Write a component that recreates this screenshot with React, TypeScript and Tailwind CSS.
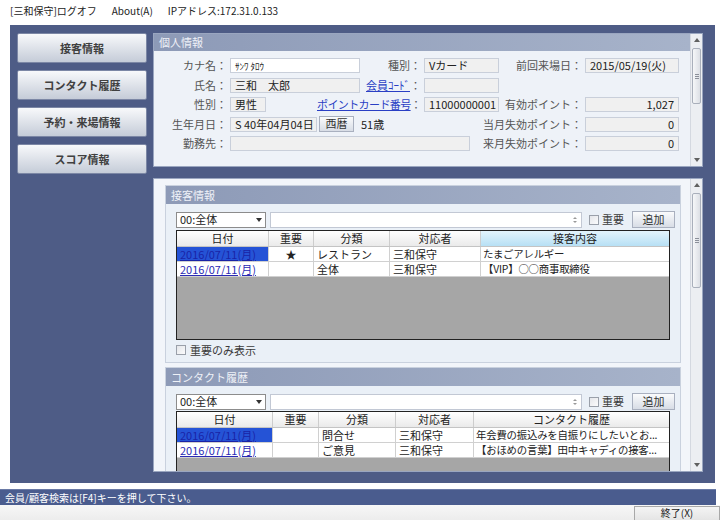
import React from 'react';

const font = "font-['Noto_Sans_CJK_JP','Noto_Sans',sans-serif]";

const Arrow: React.FC<{ down?: boolean }> = ({ down }) => (
  <svg width="6" height="4" viewBox="0 0 6 4">
    {down ? <path d="M0 0h6L3 4z" fill="#606060" /> : <path d="M0 4h6L3 0z" fill="#606060" />}
  </svg>
);

const ScrollBar: React.FC<{ thumb: string }> = ({ thumb }) => (
  <div className="w-[12px] h-full flex flex-col bg-[#eceef2] border-l border-[#d4d8e0]">
    <div className="h-[12px] flex items-center justify-center">
      <Arrow />
    </div>
    <div className={`${thumb} mt-[2px] mx-[1px] rounded-[2px] border border-[#a9afbb] bg-linear-to-r from-[#f6f7f9] to-[#dcdfe5] flex flex-col items-center justify-center gap-[1px]`}>
      <div className="w-[4px] h-px bg-[#8a8f99]" />
      <div className="w-[4px] h-px bg-[#8a8f99]" />
      <div className="w-[4px] h-px bg-[#8a8f99]" />
    </div>
    <div className="flex-1" />
    <div className="h-[12px] flex items-center justify-center">
      <Arrow down />
    </div>
  </div>
);

const Field: React.FC<{ w: string; white?: boolean; right?: boolean; children?: React.ReactNode }> = ({ w, white, right, children }) => (
  <div
    className={`${w} h-[15px] shrink-0 border border-[#c9cfda] ${white ? 'bg-white' : 'bg-[#f0f0f0]'} px-[4px] text-[11px] leading-[13px] text-[#222] whitespace-nowrap overflow-hidden ${right ? 'text-right' : ''}`}
  >
    {children}
  </div>
);

const Label: React.FC<{ w: string; tight?: boolean; children: React.ReactNode }> = ({ w, tight, children }) => (
  <div className={`${w} shrink-0 flex justify-end pr-[3px] text-[11px] leading-[15px] text-[#555] whitespace-nowrap ${tight ? 'tracking-[-0.6px]' : ''}`}>
    <span>{children}</span>
  </div>
);

const LinkLabel: React.FC<{ text: string }> = ({ text }) => (
  <>
    <span className="text-[#2a3fc4] underline">{text}</span>
    <span>：</span>
  </>
);

const SideButton: React.FC<{ label: string }> = ({ label }) => (
  <div className="h-[30px] w-[130px] rounded-[2px] border border-[#7c87a5] bg-linear-to-b from-[#f8f9fb] to-[#c5ccd8] flex items-center justify-center text-[11px] font-semibold text-[#404040]">
    {label}
  </div>
);

const Header: React.FC<{ title: string }> = ({ title }) => (
  <div className="h-[18px] shrink-0 bg-linear-to-r from-[#8d9ab7] to-[#a7b3ca] pl-[5px] flex items-center text-[11px] text-[#eef1f7]">
    {title}
  </div>
);

const CheckBox = () => <div className="w-[10px] h-[10px] shrink-0 border border-[#9aa0aa] bg-linear-to-br from-[#e4e6ea] to-[#fbfbfc]" />;

const FilterRow = () => (
  <div className="flex items-center h-[17px]">
    <div className="w-[90px] h-[16px] border border-[#8c8c8c] bg-white flex items-center justify-between px-[3px] text-[11px] text-[#222]">
      <span>00:全体</span>
      <svg width="6" height="4" viewBox="0 0 6 4">
        <path d="M0 0h6L3 4z" fill="#333" />
      </svg>
    </div>
    <div className="ml-[4px] w-[312px] h-[16px] border border-[#c2c8d4] bg-white flex items-center justify-end pr-[4px]">
      <div className="flex flex-col gap-[2px]">
        <svg width="4" height="2" viewBox="0 0 4 2"><path d="M0 2h4L2 0z" fill="#999" /></svg>
        <svg width="4" height="2" viewBox="0 0 4 2"><path d="M0 0h4L2 2z" fill="#999" /></svg>
      </div>
    </div>
    <div className="ml-[7px]">
      <CheckBox />
    </div>
    <span className="ml-[3px] text-[11px] text-[#3a3a3a]">重要</span>
    <div className="ml-[8px] w-[43px] h-[17px] border border-[#a9b0bf] bg-linear-to-b from-[#fafbfc] to-[#d8dde6] flex items-center justify-center text-[11px] text-[#333]">
      追加
    </div>
  </div>
);

type Row = { date: string; imp: string; cat: string; staff: string; body: string };

const Table: React.FC<{ widths: string[]; head: string[]; rows: Row[]; hl?: boolean }> = ({ widths, head, rows, hl }) => (
  <div className="w-[494px] h-[110px] shrink-0 border border-[#222] bg-[#a6a6a6] flex flex-col text-[11px] text-[#222]">
    <div className="h-[16px] flex bg-linear-to-b from-white to-[#eaeaea] border-b border-[#c4c4c4]">
      {head.map((h, i) => (
        <div
          key={h}
          className={`${widths[i]} h-full flex items-center justify-center border-r border-[#cdcdcd] last:border-r-0 ${
            hl && i === 4 ? 'bg-linear-to-b from-[#e3f4fc] to-[#b7e0f5]' : ''
          }`}
        >
          {h}
        </div>
      ))}
    </div>
    {rows.map((r, ri) => (
      <div key={ri} className="h-[15px] flex bg-white border-b border-[#d0d0d0]">
        <div className={`${widths[0]} h-full flex items-center pl-[3px] border-r border-[#d0d0d0] ${ri === 0 ? 'bg-[#2553d6] text-[#1a23a6]' : 'text-[#2a2ab4]'}`}>
          <span className="underline">{r.date}</span>
        </div>
        <div className={`${widths[1]} h-full flex items-center justify-center border-r border-[#d0d0d0]`}>{r.imp}</div>
        <div className={`${widths[2]} h-full flex items-center pl-[3px] border-r border-[#d0d0d0]`}>{r.cat}</div>
        <div className={`${widths[3]} h-full flex items-center pl-[3px] border-r border-[#d0d0d0]`}>{r.staff}</div>
        <div className={`${widths[4]} h-full flex items-center pl-[2px] whitespace-nowrap overflow-hidden text-[10.4px] tracking-[-0.2px]`}>{r.body}</div>
      </div>
    ))}
  </div>
);

const App: React.FC = () => {
  return (
    <div className={`w-[720px] h-[520px] bg-white overflow-hidden flex flex-col ${font}`}>
      {/* menu */}
      <div className="h-[25px] shrink-0 flex items-center pl-[10px] pb-[4px] text-[10px] text-[#222]">
        <span>[三和保守]ログオフ</span>
        <span className="ml-[15px]">About(A)</span>
        <span className="ml-[15px]">IPアドレス:172.31.0.133</span>
      </div>

      {/* main */}
      <div className="ml-[10px] w-[705px] h-[458px] shrink-0 bg-[#4e5c86] flex pt-[8px] pl-[7px] gap-[6px]">
        <div className="flex flex-col gap-[7px]">
          <SideButton label="接客情報" />
          <SideButton label="コンタクト履歴" />
          <SideButton label="予約・来場情報" />
          <SideButton label="スコア情報" />
        </div>

        <div className="w-[550px] flex flex-col">
          {/* personal info */}
          <div className="h-[134px] flex border border-[#9aa6c0] bg-[#eef2f8]">
            <div className="flex-1 flex flex-col">
              <div className="h-[17px] bg-linear-to-r from-[#8d9ab7] to-[#a7b3ca] pl-[5px] flex items-center text-[11px] text-[#eef1f7]">
                個人情報
              </div>
              <div className="pt-[7px] flex flex-col">
                <div className="h-[19.5px] flex">
                  <Label w="w-[76px]">カナ名：</Label>
                  <Field w="w-[130px]" white>
                    <span className="text-[9px]">ｻﾝﾜ ﾀﾛｳ</span>
                  </Field>
                  <Label w="w-[64px]">種別：</Label>
                  <Field w="w-[75px]">Vカード</Field>
                  <Label w="w-[86px]">前回来場日：</Label>
                  <Field w="w-[94px]">2015/05/19(火)</Field>
                </div>
                <div className="h-[19.5px] flex">
                  <Label w="w-[76px]">氏名：</Label>
                  <Field w="w-[130px]">三和　太郎</Field>
                  <Label w="w-[64px]">
                    <LinkLabel text="会員ｺｰﾄﾞ" />
                  </Label>
                  <Field w="w-[75px]" />
                </div>
                <div className="h-[19.5px] flex">
                  <Label w="w-[76px]">性別：</Label>
                  <div className="w-[130px] shrink-0">
                    <Field w="w-[36px]">男性</Field>
                  </div>
                  <Label w="w-[64px]" tight>
                    <LinkLabel text="ポイントカード番号" />
                  </Label>
                  <Field w="w-[75px]">11000000001</Field>
                  <Label w="w-[86px]">有効ポイント：</Label>
                  <Field w="w-[94px]" right>
                    1,027
                  </Field>
                </div>
                <div className="h-[19.5px] flex">
                  <Label w="w-[76px]">生年月日：</Label>
                  <div className="w-[269px] shrink-0 flex items-start">
                    <Field w="w-[87px]">S 40年04月04日</Field>
                    <div className="ml-[2px] w-[35px] h-[16px] -mt-px border border-[#a9b0bf] bg-linear-to-b from-[#fafbfc] to-[#d8dde6] flex items-center justify-center text-[11px] text-[#333]">
                      西暦
                    </div>
                    <span className="ml-[7px] text-[11px] leading-[15px] text-[#222]">51歳</span>
                  </div>
                  <Label w="w-[86px]">当月失効ポイント：</Label>
                  <Field w="w-[94px]" right>
                    0
                  </Field>
                </div>
                <div className="h-[19.5px] flex">
                  <Label w="w-[76px]">勤務先：</Label>
                  <div className="w-[269px] shrink-0">
                    <Field w="w-[240px]" />
                  </div>
                  <Label w="w-[86px]">来月失効ポイント：</Label>
                  <Field w="w-[94px]" right>
                    0
                  </Field>
                </div>
              </div>
            </div>
            <ScrollBar thumb="h-[56px]" />
          </div>

          {/* history panel */}
          <div className="mt-[11px] h-[294px] flex border border-[#9aa6c0] bg-[#f2f5fa]">
            <div className="flex-1 overflow-hidden pl-[11px] pt-[6px] flex flex-col gap-[4px]">
              <div className="w-[516px] shrink-0 flex flex-col bg-[#eaf0f7] border border-[#c9d1de]">
                <Header title="接客情報" />
                <div className="pl-[10px] pt-[7px] pb-[6px] flex flex-col">
                  <FilterRow />
                  <div className="mt-[2px]">
                    <Table
                      hl
                      widths={['w-[92px]', 'w-[45px]', 'w-[76px]', 'w-[91px]', 'w-[188px]']}
                      head={['日付', '重要', '分類', '対応者', '接客内容']}
                      rows={[
                        { date: '2016/07/11(月)', imp: '★', cat: 'レストラン', staff: '三和保守', body: 'たまごアレルギー' },
                        { date: '2016/07/11(月)', imp: '', cat: '全体', staff: '三和保守', body: '【VIP】○○商事取締役' },
                      ]}
                    />
                  </div>
                  <div className="mt-[4px] h-[12px] flex items-center gap-[4px]">
                    <CheckBox />
                    <span className="text-[11px] text-[#3a3a3a]">重要のみ表示</span>
                  </div>
                </div>
              </div>

              <div className="w-[516px] shrink-0 flex flex-col bg-[#eaf0f7] border border-[#c9d1de]">
                <Header title="コンタクト履歴" />
                <div className="pl-[10px] pt-[7px] pb-[6px] flex flex-col">
                  <FilterRow />
                  <div className="mt-[1px]">
                    <Table
                      widths={['w-[96px]', 'w-[46px]', 'w-[77px]', 'w-[78px]', 'w-[195px]']}
                      head={['日付', '重要', '分類', '対応者', 'コンタクト履歴']}
                      rows={[
                        { date: '2016/07/11(月)', imp: '', cat: '問合せ', staff: '三和保守', body: '年会費の振込みを自振りにしたいとお...' },
                        { date: '2016/07/11(月)', imp: '', cat: 'ご意見', staff: '三和保守', body: '【おほめの言葉】田中キャディの接客...' },
                      ]}
                    />
                  </div>
                </div>
              </div>
            </div>
            <ScrollBar thumb="h-[95px]" />
          </div>
        </div>
      </div>

      {/* status bar */}
      <div className="mt-[6px] w-[716px] h-[16px] shrink-0 bg-[#4a5c8e] border-t border-[#6a7aa6] pl-[5px] flex items-center text-[10px] text-white">
        会員/顧客検索は[F4]キーを押して下さい。
      </div>
      <div className="h-[30px] shrink-0 flex bg-linear-to-b from-[#f7f7f7] to-[#e2e2e2]">
        <div className="flex-1" />
        <div className="mt-[1px] w-[86px] h-[26px] border border-[#a8a8a8] bg-linear-to-b from-[#f4f4f4] to-[#d8d8d8] flex justify-center pt-0 text-[10px] leading-[12px] text-[#222]">
          終了(X)
        </div>
      </div>
    </div>
  );
};

export default App;
